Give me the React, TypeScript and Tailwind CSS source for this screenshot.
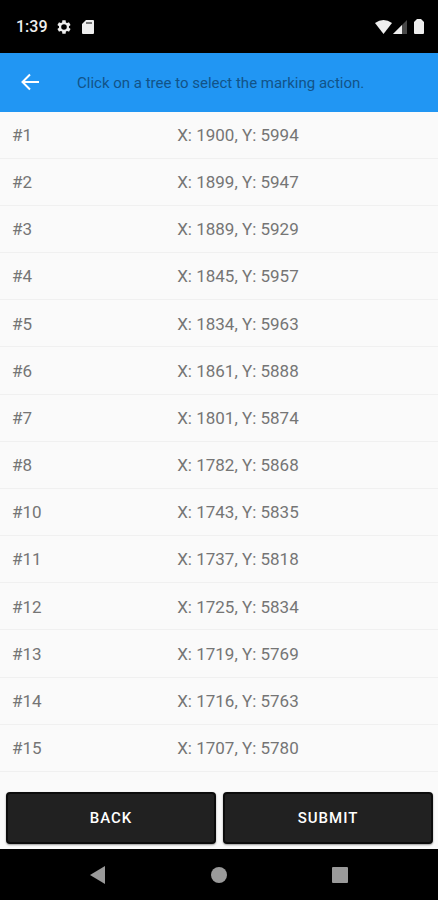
import React from 'react';

interface Tree {
  id: number;
  x: number;
  y: number;
}

const trees: Tree[] = [
  { id: 1, x: 1900, y: 5994 },
  { id: 2, x: 1899, y: 5947 },
  { id: 3, x: 1889, y: 5929 },
  { id: 4, x: 1845, y: 5957 },
  { id: 5, x: 1834, y: 5963 },
  { id: 6, x: 1861, y: 5888 },
  { id: 7, x: 1801, y: 5874 },
  { id: 8, x: 1782, y: 5868 },
  { id: 10, x: 1743, y: 5835 },
  { id: 11, x: 1737, y: 5818 },
  { id: 12, x: 1725, y: 5834 },
  { id: 13, x: 1719, y: 5769 },
  { id: 14, x: 1716, y: 5763 },
  { id: 15, x: 1707, y: 5780 },
];

const StatusBar: React.FC = () => (
  <div className="flex h-[53px] items-center justify-between bg-black pr-[14px] pl-4 text-[#eeeeee]">
    <div className="flex items-center">
      <span className="w-[40px] pt-px text-base font-medium">1:39</span>
      <svg viewBox="0 0 24 24" className="size-4" fill="currentColor" aria-hidden="true">
        <path d="M19.4 13c.04-.3.06-.66.06-1s-.02-.7-.07-1l2.1-1.6c.2-.15.24-.42.12-.64l-2-3.46c-.12-.22-.38-.3-.6-.22l-2.5 1c-.5-.4-1.07-.73-1.7-.98L14.5 2.4a.5.5 0 0 0-.5-.4h-4c-.25 0-.46.17-.5.4l-.37 2.7c-.6.25-1.16.6-1.68.98l-2.5-1c-.23-.1-.48 0-.6.22l-2 3.46c-.13.22-.07.5.12.64L4.6 11c-.05.3-.08.66-.08 1s.03.7.08 1l-2.13 1.6c-.2.16-.24.43-.12.64l2 3.46c.12.23.37.3.6.23l2.5-1c.5.4 1.07.73 1.68.98l.37 2.7c.04.23.25.4.5.4h4c.25 0 .46-.17.5-.4l.37-2.7c.6-.25 1.16-.58 1.68-.98l2.5 1c.22.08.47 0 .6-.23l2-3.46c.12-.2.06-.48-.13-.63L19.4 13zM12 16.2a4.2 4.2 0 1 1 0-8.4 4.2 4.2 0 0 1 0 8.4z" />
      </svg>
      <svg viewBox="0 0 12 14" className="ml-[10px] h-[14px] w-3" fill="currentColor" aria-hidden="true">
        <path fillRule="evenodd" d="M4 0h7q1 0 1 1v12q0 1-1 1H1q-1 0-1-1V4zM4.500 2v2h1V2zm2 0v2h1V2zm2 0v2h1V2z" />
      </svg>
    </div>
    <div className="flex items-center">
      <svg viewBox="0 0 17 14" className="h-[14px] w-[17px]" fill="currentColor" aria-hidden="true">
        <path d="M0 3Q8.500-3 17 3L8.500 14z" />
      </svg>
      <svg viewBox="0 0 14 14" className="ml-px h-[14px] w-[14px]" fill="currentColor" aria-hidden="true">
        <path d="M14 0v14H0z" opacity=".3" />
        <path d="M9 5v9H0z" />
      </svg>
      <svg viewBox="0 0 10 15" className="ml-[7px] h-[15px] w-[10px]" fill="currentColor" aria-hidden="true">
        <path d="M3 0h4l1 1 2 2v11q0 1-1 1H1q-1 0-1-1V3l2-2z" />
      </svg>
    </div>
  </div>
);

const Header: React.FC = () => (
  <header className="flex h-[59px] items-center bg-[#2196f3] pr-4 pl-5">
    <button type="button" aria-label="Go back" className="text-white">
      <svg viewBox="0 0 20 20" className="size-5" fill="none" stroke="currentColor" strokeWidth="2" aria-hidden="true">
        <path d="M19 9H3M10 1.500L2.500 9l7.500 7.500" />
      </svg>
    </button>
    <h1 className="ml-[37px] pt-[2px] text-[15px] text-[#125388]">Click on a tree to select the marking action.</h1>
  </header>
);

const TreeTable: React.FC = () => (
  <table className="w-full flex-1 table-fixed border-collapse text-left text-[17px] text-[#757575]">
    <tbody>
      {trees.map((tree) => (
        <tr key={tree.id} className="border-b border-[#f0f0f0]">
          <th scope="row" className="w-2/5 pt-[2px] pl-3 font-normal">#{tree.id}</th>
          <td className="pt-[2px] pl-[2px]">X: {tree.x}, Y: {tree.y}</td>
        </tr>
      ))}
    </tbody>
  </table>
);

const buttonClass =
  'h-[52px] flex-1 rounded border-2 border-[#0c0c0c] bg-[#212121] text-[15px] font-medium tracking-[1px] text-white shadow-[0_1px_2px_rgba(0,0,0,0.4)]';

const NavBar: React.FC = () => (
  <nav className="flex h-[51px] items-center justify-center gap-[105px] bg-black text-[#9a9a9a]">
    <button type="button" aria-label="Back">
      <svg viewBox="0 0 16 18" className="h-[18px] w-4" fill="currentColor" aria-hidden="true">
        <path d="M15 0v18L0 9z" />
      </svg>
    </button>
    <button type="button" aria-label="Home">
      <svg viewBox="0 0 16 16" className="size-4" fill="currentColor" aria-hidden="true">
        <circle cx="8" cy="8" r="8" />
      </svg>
    </button>
    <button type="button" aria-label="Recent apps">
      <svg viewBox="0 0 16 16" className="size-4" fill="currentColor" aria-hidden="true">
        <rect width="16" height="16" rx="1" />
      </svg>
    </button>
  </nav>
);

export default function App() {
  return (
    <div className="flex min-h-screen flex-col bg-[#fafafa] font-[Roboto,'Noto_Sans',sans-serif]">
      <StatusBar />
      <Header />
      <main className="flex flex-1 flex-col">
        <TreeTable />
        <div className="mt-5 flex gap-[7px] pr-[5px] pb-[5px] pl-[6px]">
          <button type="button" className={buttonClass}>BACK</button>
          <button type="button" className={buttonClass}>SUBMIT</button>
        </div>
      </main>
      <NavBar />
    </div>
  );
}
